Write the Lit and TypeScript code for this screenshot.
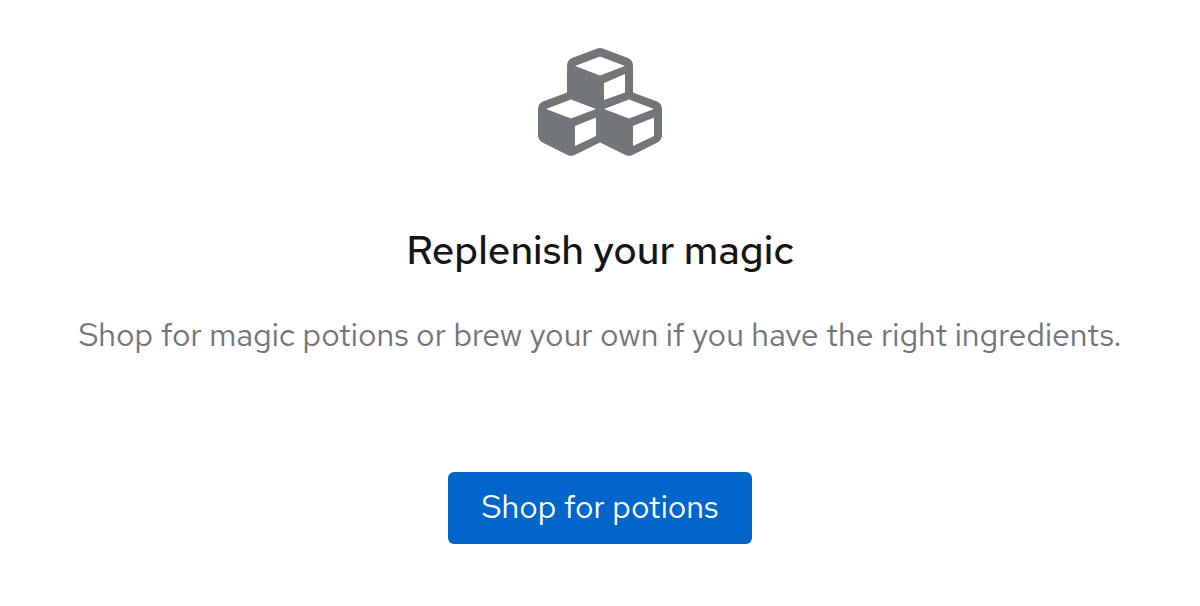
import { LitElement, html, css } from "lit";
import { customElement } from "lit/decorators.js";

@customElement("app-root")
export class AppRoot extends LitElement {
  static styles = css`
    :host {
      display: block;
      font-family: "Red Hat Text", Lato, "Open Sans", sans-serif;
      background: #fff;
      min-height: 100vh;
    }
    .empty-state {
      display: flex;
      flex-direction: column;
      align-items: center;
      text-align: center;
      padding: 48px 16px;
    }
    .icon {
      display: block;
      width: 124px;
      height: 108px;
      color: #737679;
    }
    .title {
      margin: 68px 0 0;
      font-size: 40px;
      line-height: 52px;
      font-weight: 500;
      color: #151515;
    }
    .body {
      margin: 35px 0 0;
      font-size: 32px;
      line-height: 48px;
      font-weight: 400;
      color: #737679;
    }
    .action {
      margin: 113px 0 0;
      padding: 11px 34px 13px;
      border: 0;
      border-radius: 6px;
      background: #06c;
      color: #fff;
      font-family: inherit;
      font-size: 32px;
      line-height: 48px;
      font-weight: 400;
      cursor: pointer;
    }
  `;

  render() {
    return html`
      <main class="empty-state">
        <svg class="icon" viewBox="0 0 124 108" aria-hidden="true">
          <path
            fill="currentColor"
            fill-rule="evenodd"
            d="M59.300 .6Q62 -.4 64.700 .6L90 10Q95 12 95 18V44.500L119 53.500Q124 55.500 124 61V87Q124 92 119.500 94.500L94.500 107Q91 108.700 87.500 107L62 94.500L36.500 107Q33 108.700 29.500 107L4.500 94.500Q0 92 0 87V61Q0 55.500 5 53.500L29 44.500V18Q29 12 34 10ZM37 18L62 27.500L87 18L62 8.500ZM66 35V52L87 44.500V26ZM8 61L33 70.500L58 61L33 51.500ZM66 61L91 70.500L116 61L91 51.500ZM37 78V98L58 88V69.500ZM95 78V98L116 88V69.500Z"
          />
        </svg>
        <h1 class="title">Replenish your magic</h1>
        <p class="body">
          Shop for magic potions or brew your own if you have the right ingredients.
        </p>
        <button class="action" type="button">Shop for potions</button>
      </main>
    `;
  }
}
